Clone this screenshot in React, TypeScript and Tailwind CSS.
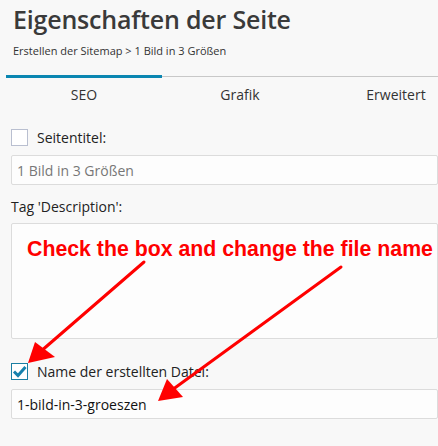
import React from "react";

const ui = { fontFamily: '"Open Sans", "Noto Sans", sans-serif' };

function Tab({ label, active }: { label: string; active?: boolean }) {
  return (
    <div className="relative w-[156px] shrink-0 h-[34px] flex items-center justify-center text-[14px] text-[#333]">
      <div
        className={
          active
            ? "absolute left-0 right-0 top-[-2px] h-[3px] bg-[#0a86b1]"
            : "absolute left-0 right-0 top-[-1px] h-px bg-[#c8c8c8]"
        }
      />
      {label}
    </div>
  );
}

function Box({ checked }: { checked?: boolean }) {
  return (
    <div
      className={
        "w-[17px] h-[17px] border bg-white flex items-center justify-center shrink-0 " +
        (checked ? "border-[#1b7fa3]" : "border-[#b9bfd0]")
      }
    >
      {checked && (
        <svg width="15" height="15" viewBox="0 0 15 15">
          <path d="M2 7.5 L6 11.5 L13.5 3" fill="none" stroke="#1681ad" strokeWidth="3" />
        </svg>
      )}
    </div>
  );
}

export default function App() {
  return (
    <div className="relative w-[438px] h-[446px] overflow-hidden bg-[#f8f8f8] text-[#222]" style={ui}>
      <div className="pl-[13px] pt-[1px]">
        <h1 className="text-[25px] font-semibold tracking-[-0.2px] leading-[36px] text-[#3a3a3a]">Eigenschaften der Seite</h1>
        <div className="text-[11px] leading-[16px] mt-[6px] text-[#333]">
          Erstellen der Sitemap &gt; 1 Bild in 3 Größen
        </div>
      </div>

      <div className="ml-[6px] mt-[18px] flex">
        <Tab label="SEO" active />
        <Tab label="Grafik" />
        <Tab label="Erweitert" />
      </div>

      <div className="pl-[11px] mt-[18px]">
        <div className="flex items-center gap-[9px] h-[17px]">
          <Box />
          <span className="text-[14px]">Seitentitel:</span>
        </div>
        <div className="mt-[9px] h-[30px] border border-[#dcdcdc] rounded-[2px] bg-[#fdfdfd] flex items-center pl-[5px] text-[14px] text-[#777]">
          1 Bild in 3 Größen
        </div>
        <div className="mt-[12px] text-[14px] leading-[20px]">Tag 'Description':</div>
        <div className="mt-[6px] h-[116px] border border-[#dcdcdc] rounded-[2px] bg-[#fdfdfd]" />
        <div className="mt-[24px] flex items-center gap-[9px] h-[17px]">
          <Box checked />
          <span className="text-[14px]">Name der erstellten Datei:</span>
        </div>
        <div className="mt-[9px] h-[30px] border border-[#dcdcdc] rounded-[2px] bg-[#fdfdfd] flex items-center pl-[5px] text-[14px] text-[#111]">
          1-bild-in-3-groeszen
        </div>
      </div>

      {/* red annotation over the form */}
      <div
        className="absolute left-[27px] top-[237px] text-[21.3px] font-bold text-[#ff0000] leading-[24px] whitespace-nowrap"
        style={{ fontFamily: '"Liberation Sans", Arial, sans-serif' }}
      >
        Check the box and change the file name
      </div>
      <svg className="absolute inset-0 pointer-events-none" width="438" height="446">
        <line x1="144" y1="262" x2="40" y2="352" stroke="#ff0000" strokeWidth="3" strokeLinecap="round" />
        <polygon points="28,363 35,342 55,357" fill="#ff0000" />
        <line x1="341" y1="267" x2="172" y2="390" stroke="#ff0000" strokeWidth="3" strokeLinecap="round" />
        <polygon points="158,401 167,379 183,397" fill="#ff0000" />
      </svg>
    </div>
  );
}
